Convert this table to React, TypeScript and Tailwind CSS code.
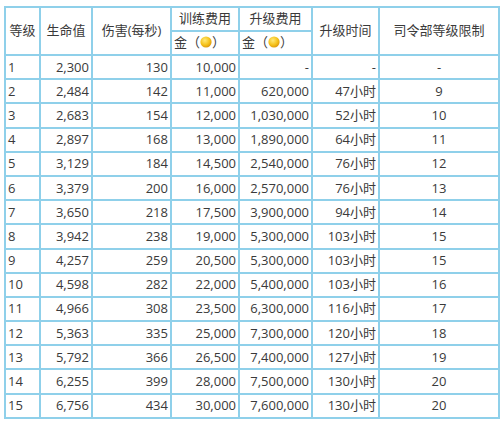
const rows: [string, string, string, string, string, string, string][] = [
  ["1", "2,300", "130", "10,000", "-", "-", "-"],
  ["2", "2,484", "142", "11,000", "620,000", "47小时", "9"],
  ["3", "2,683", "154", "12,000", "1,030,000", "52小时", "10"],
  ["4", "2,897", "168", "13,000", "1,890,000", "64小时", "11"],
  ["5", "3,129", "184", "14,500", "2,540,000", "76小时", "12"],
  ["6", "3,379", "200", "16,000", "2,570,000", "76小时", "13"],
  ["7", "3,650", "218", "17,500", "3,900,000", "94小时", "14"],
  ["8", "3,942", "238", "19,000", "5,300,000", "103小时", "15"],
  ["9", "4,257", "259", "20,500", "5,300,000", "103小时", "15"],
  ["10", "4,598", "282", "22,000", "5,400,000", "103小时", "16"],
  ["11", "4,966", "308", "23,500", "6,300,000", "116小时", "17"],
  ["12", "5,363", "335", "25,000", "7,300,000", "120小时", "18"],
  ["13", "5,792", "366", "26,500", "7,400,000", "127小时", "19"],
  ["14", "6,255", "399", "28,000", "7,500,000", "130小时", "20"],
  ["15", "6,756", "434", "30,000", "7,600,000", "130小时", "20"],
];

const Coin = () => (
  <svg width="12" height="12" viewBox="0 0 12 12" className="inline-block align-[-1px]">
    <defs>
      <radialGradient id="cg" cx="0.4" cy="0.35" r="0.7">
        <stop offset="0" stopColor="#ffe97a" />
        <stop offset="0.6" stopColor="#f5c21b" />
        <stop offset="1" stopColor="#d9920a" />
      </radialGradient>
    </defs>
    <circle cx="6" cy="6" r="5.6" fill="url(#cg)" />
  </svg>
);

const th = "border-2 border-[#8fd0ea] font-normal text-center p-0";
const td = "border-2 border-[#8fd0ea] px-[2px] py-0 h-[24.2px] leading-none";

export default function App() {
  return (
    <div className="w-[500px] h-[422px] bg-white pt-[6px] pl-[4px]">
      <table
        className="border-collapse table-fixed text-[13px] text-[#3a3a3a] w-[494px]"
        style={{ fontFamily: '"Open Sans", "Noto Sans CJK SC", sans-serif' }}
      >
        <colgroup>
          <col className="w-[35px]" />
          <col className="w-[52px]" />
          <col className="w-[79px]" />
          <col className="w-[68px]" />
          <col className="w-[73px]" />
          <col className="w-[67px]" />
          <col className="w-[120px]" />
        </colgroup>
        <thead>
          <tr className="h-[24px]">
            <th rowSpan={2} className={th}>等级</th>
            <th rowSpan={2} className={th}>生命值</th>
            <th rowSpan={2} className={th}>伤害(每秒)</th>
            <th className={th}>训练费用</th>
            <th className={th}>升级费用</th>
            <th rowSpan={2} className={th}>升级时间</th>
            <th rowSpan={2} className={th}>司令部等级限制</th>
          </tr>
          <tr className="h-[24px]">
            <th className={`${th} text-left pl-[2px]`}>
              金（<Coin />）
            </th>
            <th className={`${th} text-left pl-[2px]`}>
              金（<Coin />）
            </th>
          </tr>
        </thead>
        <tbody>
          {rows.map((r) => (
            <tr key={r[0]} className="h-[24.2px]">
              <td className={`${td} text-left`}>{r[0]}</td>
              <td className={`${td} text-right`}>{r[1]}</td>
              <td className={`${td} text-right`}>{r[2]}</td>
              <td className={`${td} text-right`}>{r[3]}</td>
              <td className={`${td} text-right`}>{r[4]}</td>
              <td className={`${td} text-right`}>{r[5]}</td>
              <td className={`${td} text-center`}>{r[6]}</td>
            </tr>
          ))}
        </tbody>
      </table>
    </div>
  );
}
